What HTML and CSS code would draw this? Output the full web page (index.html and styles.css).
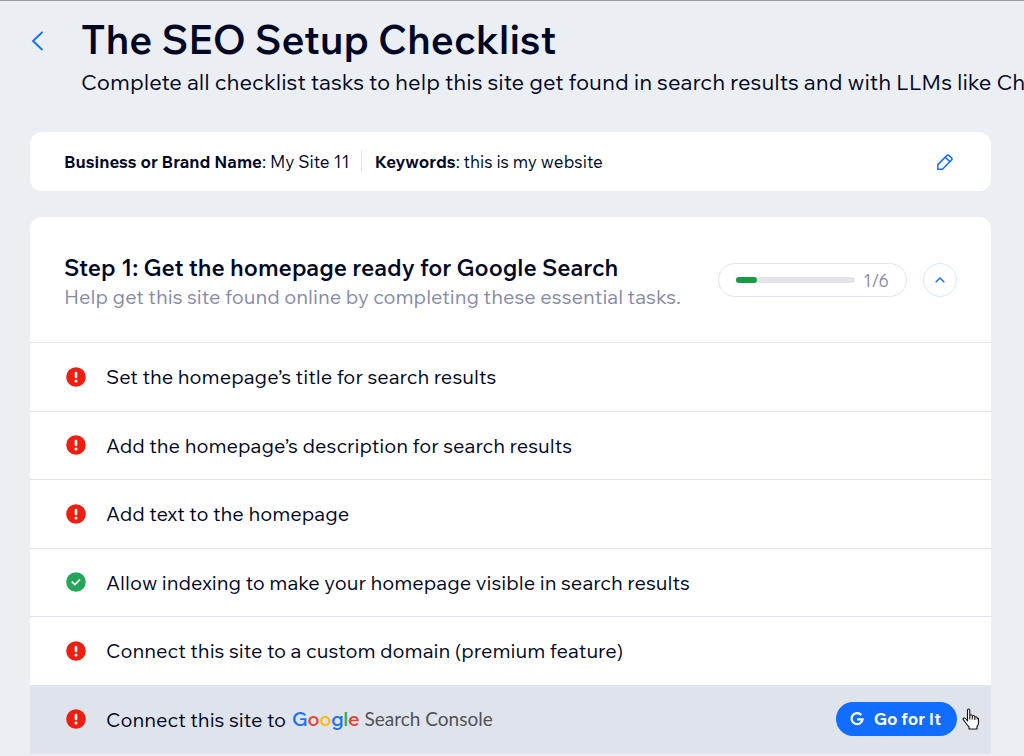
FILE: index.html
```html
<!DOCTYPE html>
<html lang="en">
<head>
    <meta charset="UTF-8">
    <meta name="viewport" content="width=device-width, initial-scale=1.0">
    <title>The SEO Setup Checklist</title>
    <link rel="stylesheet" href="styles.css">
</head>
<body>
    <header class="page-header">
        <a href="#" class="back-link" aria-label="Back">
            <svg width="14" height="20" viewBox="0 0 14 20" fill="none" stroke="#116dff" stroke-width="1.8"><path d="M12.500 1 3 10l9.500 9"/></svg>
        </a>
        <div class="page-heading">
            <h1>The SEO Setup Checklist</h1>
            <p>Complete all checklist tasks to help this site get found in search results and with LLMs like ChatGPT.</p>
        </div>
    </header>

    <main class="content">
        <section class="card info-card">
            <p class="info-item"><strong>Business or Brand Name</strong>: My Site 11</p>
            <p class="info-item"><strong>Keywords</strong>: this is my website</p>
            <button type="button" class="edit-button" aria-label="Edit">
                <svg width="18" height="18" viewBox="0 0 18 18" fill="none" stroke="#116dff" stroke-width="1.5" stroke-linejoin="round"><path d="M1.800 16.200V11.600L11 2.400Q12 1.400 13 2.400L15.600 5Q16.600 6 15.600 7L6.400 16.200ZM9.300 4.100l4.600 4.600"/></svg>
            </button>
        </section>

        <section class="card step-card">
            <div class="step-header">
                <div class="step-text">
                    <h2>Step 1: Get the homepage ready for Google Search</h2>
                    <p>Help get this site found online by completing these essential tasks.</p>
                </div>
                <div class="step-controls">
                    <div class="progress-pill">
                        <div class="progress-track"><div class="progress-bar"></div></div>
                        <span>1/6</span>
                    </div>
                    <button type="button" class="toggle-button" aria-label="Collapse">
                        <svg width="10" height="6" viewBox="0 0 10 6" fill="none" stroke="#116dff" stroke-width="1.4"><path d="M.7 5.300 5 1l4.300 4.300"/></svg>
                    </button>
                </div>
            </div>

            <ul class="task-list">
                <li class="task">
                    <svg class="status" viewBox="0 0 20 20"><circle cx="10" cy="10" r="9.800" fill="#ee1f10"/><path d="M10 6v4" stroke="#fff" stroke-width="2.600" stroke-linecap="round"/><circle cx="10" cy="14" r="1.500" fill="#fff"/></svg>
                    <span>Set the homepage’s title for search results</span>
                </li>
                <li class="task">
                    <svg class="status" viewBox="0 0 20 20"><circle cx="10" cy="10" r="9.800" fill="#ee1f10"/><path d="M10 6v4" stroke="#fff" stroke-width="2.600" stroke-linecap="round"/><circle cx="10" cy="14" r="1.500" fill="#fff"/></svg>
                    <span>Add the homepage’s description for search results</span>
                </li>
                <li class="task">
                    <svg class="status" viewBox="0 0 20 20"><circle cx="10" cy="10" r="9.800" fill="#ee1f10"/><path d="M10 6v4" stroke="#fff" stroke-width="2.600" stroke-linecap="round"/><circle cx="10" cy="14" r="1.500" fill="#fff"/></svg>
                    <span>Add text to the homepage</span>
                </li>
                <li class="task">
                    <svg class="status" viewBox="0 0 20 20"><circle cx="10" cy="10" r="9.800" fill="#25a55a"/><path d="m5.800 9.600 3 3 5.200-5" fill="none" stroke="#fff" stroke-width="1.800"/></svg>
                    <span>Allow indexing to make your homepage visible in search results</span>
                </li>
                <li class="task">
                    <svg class="status" viewBox="0 0 20 20"><circle cx="10" cy="10" r="9.800" fill="#ee1f10"/><path d="M10 6v4" stroke="#fff" stroke-width="2.600" stroke-linecap="round"/><circle cx="10" cy="14" r="1.500" fill="#fff"/></svg>
                    <span>Connect this site to a custom domain (premium feature)</span>
                </li>
                <li class="task active">
                    <svg class="status" viewBox="0 0 20 20"><circle cx="10" cy="10" r="9.800" fill="#ee1f10"/><path d="M10 6v4" stroke="#fff" stroke-width="2.600" stroke-linecap="round"/><circle cx="10" cy="14" r="1.500" fill="#fff"/></svg>
                    <span>Connect this site to</span>
                    <span class="console-logo"><span class="google"><span class="blue">G</span><span class="red">o</span><span class="yellow">o</span><span class="blue">g</span><span class="green">l</span><span class="red">e</span></span> Search Console</span>
                    <button type="button" class="go-button">
                        <svg width="14" height="14" viewBox="0 0 14 14" fill="none" stroke="#fff" stroke-width="2.200"><path d="M11.300 3A5.500 5.500 0 1 0 12.600 7.300H7.200"/></svg>
                        Go for It
                    </button>
                    <svg class="cursor" width="18" height="22" viewBox="0 0 18 22" fill="#fff" stroke="#111" stroke-width="1.100" stroke-linejoin="round"><path d="M5.500 13V2.200Q5.500 1 6.600 1T7.800 2.200V8Q7.800 6.700 9 6.700T10.300 8V9Q10.300 7.500 11.500 7.500T12.800 9v1Q12.800 8.700 14 8.700T15.200 10v1Q16.500 9.300 16.500 11.500V15Q16.500 17 15 18.500V21H7V19Q5.500 17.500 3.500 14.500L1.300 11.700Q.7 10.300 2 10 3.200 9.700 4.300 11.300ZM7.800 8v3.500M10.300 9v2.500M12.800 10v2"/></svg>
                </li>
            </ul>
        </section>
    </main>
</body>
</html>
```

FILE: styles.css
```css
* {
    box-sizing: border-box;
}
body {
    margin: 0;
    font-family: "Wix Madefor Text", "Wix Madefor Display", Inter, "Noto Sans", sans-serif;
    background: #ebeef3;
    color: #000624;
    border-top: 1px solid #9a9ca6;
    overflow: hidden;
}
h1, h2, p, ul {
    margin: 0;
    padding: 0;
}
button {
    font-family: inherit;
    cursor: pointer;
}
svg {
    display: block;
    flex-shrink: 0;
}
.page-header {
    display: flex;
    padding: 14px 0 0 30px;
    overflow: hidden;
}
.back-link {
    width: 51px;
    flex-shrink: 0;
    padding-top: 16px;
}
.page-heading h1 {
    font-size: 40px;
    line-height: 48px;
    font-weight: 600;
}
.page-heading p {
    font-size: 22px;
    line-height: 38px;
    white-space: nowrap;
}
.content {
    padding: 31px 33px 0 30px;
}
.card {
    background: #fff;
    border-radius: 12px;
}
.info-card {
    display: flex;
    align-items: center;
    padding: 18px 34px;
    margin-bottom: 26px;
    font-size: 17px;
    line-height: 23px;
}
.info-item + .info-item {
    margin-left: 11px;
    padding-left: 13px;
    border-left: 1px solid #dfe3eb;
}
.edit-button {
    margin-left: auto;
    padding: 2px 3px;
    border: none;
    background: transparent;
}
.step-header {
    display: flex;
    align-items: center;
    gap: 16px;
    padding: 36px 34px 31px;
}
.step-text {
    flex: 1;
    white-space: nowrap;
}
.step-text h2 {
    font-size: 23px;
    line-height: 30px;
    font-weight: 600;
}
.step-text p {
    font-size: 20px;
    line-height: 28px;
    color: #868aa5;
}
.step-controls {
    display: flex;
    gap: 16px;
    padding-bottom: 4px;
}
.progress-pill {
    display: flex;
    align-items: center;
    gap: 8px;
    height: 34px;
    padding: 0 17px;
    border: 1px solid #dfe5eb;
    border-radius: 17px;
    font-size: 17px;
    color: #868aa5;
}
.progress-track {
    width: 119px;
    height: 6px;
    border-radius: 3px;
    background: #e3e3e9;
}
.progress-bar {
    width: 17%;
    height: 100%;
    border-radius: 3px;
    background: #189a48;
}
.toggle-button {
    display: flex;
    align-items: center;
    justify-content: center;
    width: 34px;
    height: 34px;
    padding: 0;
    border: 1px solid #d6e6fe;
    border-radius: 50%;
    background: #fff;
}
.task-list {
    display: grid;
    grid-auto-rows: 1fr;
    min-height: 412px;
    list-style: none;
    border-bottom: 1px solid #dfe3eb;
}
.task {
    display: flex;
    align-items: center;
    padding: 0 34px 0 36px;
    border-top: 1px solid #dfe3eb;
    font-size: 20px;
    white-space: nowrap;
}
.task.active {
    position: relative;
    border-color: #dfe3eb;
    background: #dfe3eb;
}
.status {
    width: 20px;
    height: 20px;
    margin-right: 20px;
}
.console-logo {
    margin-left: 6px;
    font-family: Lato, sans-serif;
    font-size: 19px;
    color: #4f5257;
}
.google {
    font-family: "Wix Madefor Display", Lato, sans-serif;
    font-size: 19px;
    font-weight: 600;
}
.blue {
    color: #1a73f8;
}
.red {
    color: #ea4335;
}
.yellow {
    color: #fbbc05;
}
.green {
    color: #34a853;
}
.go-button {
    display: flex;
    align-items: center;
    gap: 10px;
    height: 34px;
    margin-left: auto;
    padding: 0 16px 1px 14px;
    border: none;
    border-radius: 17px;
    background: #116dff;
    color: #fff;
    font-size: 17px;
    font-weight: 700;
}
.cursor {
    position: absolute;
    right: 11px;
    top: 22px;
}
```
